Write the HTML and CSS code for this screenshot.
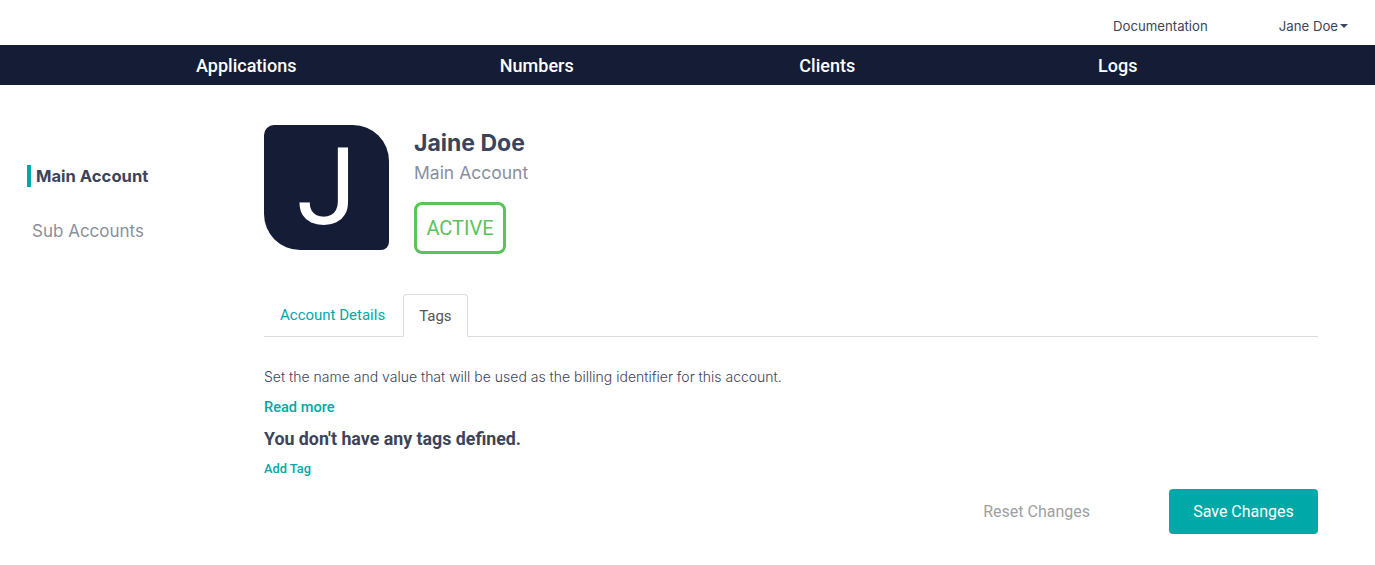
FILE: index.html
```html
<!DOCTYPE html>
<html>
<head>
<meta charset="utf-8">
<link rel="stylesheet" href="styles.css">
</head>
<body>
<header class="topbar">
  <a class="top-link">Documentation</a>
  <a class="top-link user">Jane Doe<span class="caret"></span></a>
</header>
<nav class="mainnav">
  <div class="nav-inner">
    <a class="nav-item">Applications</a>
    <a class="nav-item">Numbers</a>
    <a class="nav-item">Clients</a>
    <a class="nav-item">Logs</a>
  </div>
</nav>
<div class="page">
  <aside class="sidebar">
    <a class="side-item active">Main Account</a>
    <a class="side-item">Sub Accounts</a>
  </aside>
  <main class="content">
    <section class="profile">
      <div class="avatar">J</div>
      <div class="profile-info">
        <h1 class="name">Jaine Doe</h1>
        <div class="subtitle">Main Account</div>
        <div class="status">ACTIVE</div>
      </div>
    </section>
    <div class="tabs">
      <a class="tab">Account Details</a>
      <a class="tab selected">Tags</a>
    </div>
    <div class="tab-body">
      <p class="desc">Set the name and value that will be used as the billing identifier for this account.</p>
      <a class="read-more">Read more</a>
      <h2 class="empty">You don't have any tags defined.</h2>
      <a class="add-tag">Add Tag</a>
    </div>
    <div class="actions">
      <button class="btn-reset">Reset Changes</button>
      <button class="btn-save">Save Changes</button>
    </div>
  </main>
</div>
</body>
</html>
```
FILE: styles.css
```css
* { box-sizing: border-box; }
html, body { margin: 0; padding: 0; background: #fff; }
body { font-family: Inter, "Noto Sans", sans-serif; color: #3d4459; }
a { cursor: pointer; }

.topbar {
  height: 45px;
  display: flex;
  justify-content: flex-end;
  align-items: center;
  padding-right: 27px;
  padding-top: 6px;
  gap: 71px;
}
.top-link {
  font-size: 13.2px;
  color: #3d4459;
  display: flex;
  align-items: center;
}
.caret {
  display: inline-block;
  width: 0; height: 0;
  border-left: 4px solid transparent;
  border-right: 4px solid transparent;
  border-top: 4px solid #3d4459;
  margin-left: 2px;
}

.mainnav {
  height: 40px;
  background: #151c35;
}
.nav-inner {
  width: 1162px;
  margin-left: 101px;
  height: 100%;
  display: grid;
  grid-template-columns: repeat(4, 1fr);
  align-items: center;
}
.nav-item {
  text-align: center;
  color: #fff;
  font-family: Roboto, sans-serif;
  font-weight: 500;
  font-size: 18px;
}

.page {
  display: flex;
  padding-top: 40px;
}
.sidebar {
  width: 264px;
  flex: none;
  padding-left: 27px;
  padding-top: 40px;
  display: flex;
  flex-direction: column;
  gap: 33px;
}
.side-item {
  font-size: 17px;
  color: #8a8f9c;
  line-height: 22px;
  padding-left: 5px;
}
.side-item.active {
  font-size: 16.6px;
  font-weight: 700;
  color: #3d4459;
  border-left: 4px solid #00a8a8;
  padding-left: 5px;
}

.content {
  width: 1054px;
  flex: none;
}
.profile {
  display: flex;
  gap: 25px;
}
.avatar {
  width: 125px;
  height: 125px;
  background: #151c35;
  border-radius: 10px 36px 8px 36px;
  color: #fff;
  font-family: Roboto, sans-serif;
  font-size: 108px;
  line-height: 125px;
  text-align: center;
  flex: none;
}
.profile-info { padding-top: 3px; }
.name {
  margin: 0;
  font-size: 23px;
  font-weight: 700;
  line-height: 30px;
  color: #3d4459;
}
.subtitle {
  font-size: 17.5px;
  color: #8a8f9c;
  line-height: 30px;
}
.status {
  margin-top: 14px;
  width: 92px;
  height: 52px;
  border: 3px solid #5cc25a;
  border-radius: 8px;
  color: #5cc25a;
  font-family: Roboto, sans-serif;
  font-size: 20px;
  display: flex;
  align-items: center;
  justify-content: center;
}

.tabs {
  margin-top: 40px;
  display: flex;
  border-bottom: 1px solid #dcdcdc;
  height: 43px;
}
.tab {
  font-family: Roboto, sans-serif;
  font-size: 15px;
  color: #00a8a8;
  padding: 0 16px;
  display: flex;
  align-items: center;
  margin-right: 2px;
}
.tab.selected {
  color: #555;
  border: 1px solid #dcdcdc;
  border-bottom: 1px solid #fff;
  border-radius: 4px 4px 0 0;
  height: 43px;
  padding: 0 15px;
}

.tab-body { padding-top: 31px; }
.desc {
  margin: 0;
  font-size: 14px;
  color: #3d4459;
  font-weight: 300;
  line-height: 18px;
}
.read-more {
  display: block;
  margin-top: 12px;
  font-family: Roboto, sans-serif;
  font-weight: 500;
  font-size: 14.6px;
  color: #00a8a8;
  line-height: 18px;
}
.empty {
  margin: 12px 0 0;
  font-family: Roboto, sans-serif;
  font-weight: 700;
  font-size: 17.8px;
  line-height: 22px;
  color: #3d4459;
}
.add-tag {
  display: block;
  margin-top: 11px;
  font-family: Roboto, sans-serif;
  font-weight: 500;
  font-size: 12.8px;
  color: #00a8a8;
  line-height: 16px;
}

.actions {
  margin-top: 12px;
  display: flex;
  justify-content: flex-end;
  align-items: center;
  gap: 79px;
}
.btn-reset {
  background: none;
  border: none;
  padding: 0;
  font-family: Roboto, sans-serif;
  font-size: 16px;
  color: #a0a0a0;
}
.btn-save {
  width: 149px;
  height: 45px;
  background: #00a8a8;
  color: #fff;
  border: none;
  border-radius: 4px;
  font-family: Roboto, sans-serif;
  font-size: 16px;
}
```
